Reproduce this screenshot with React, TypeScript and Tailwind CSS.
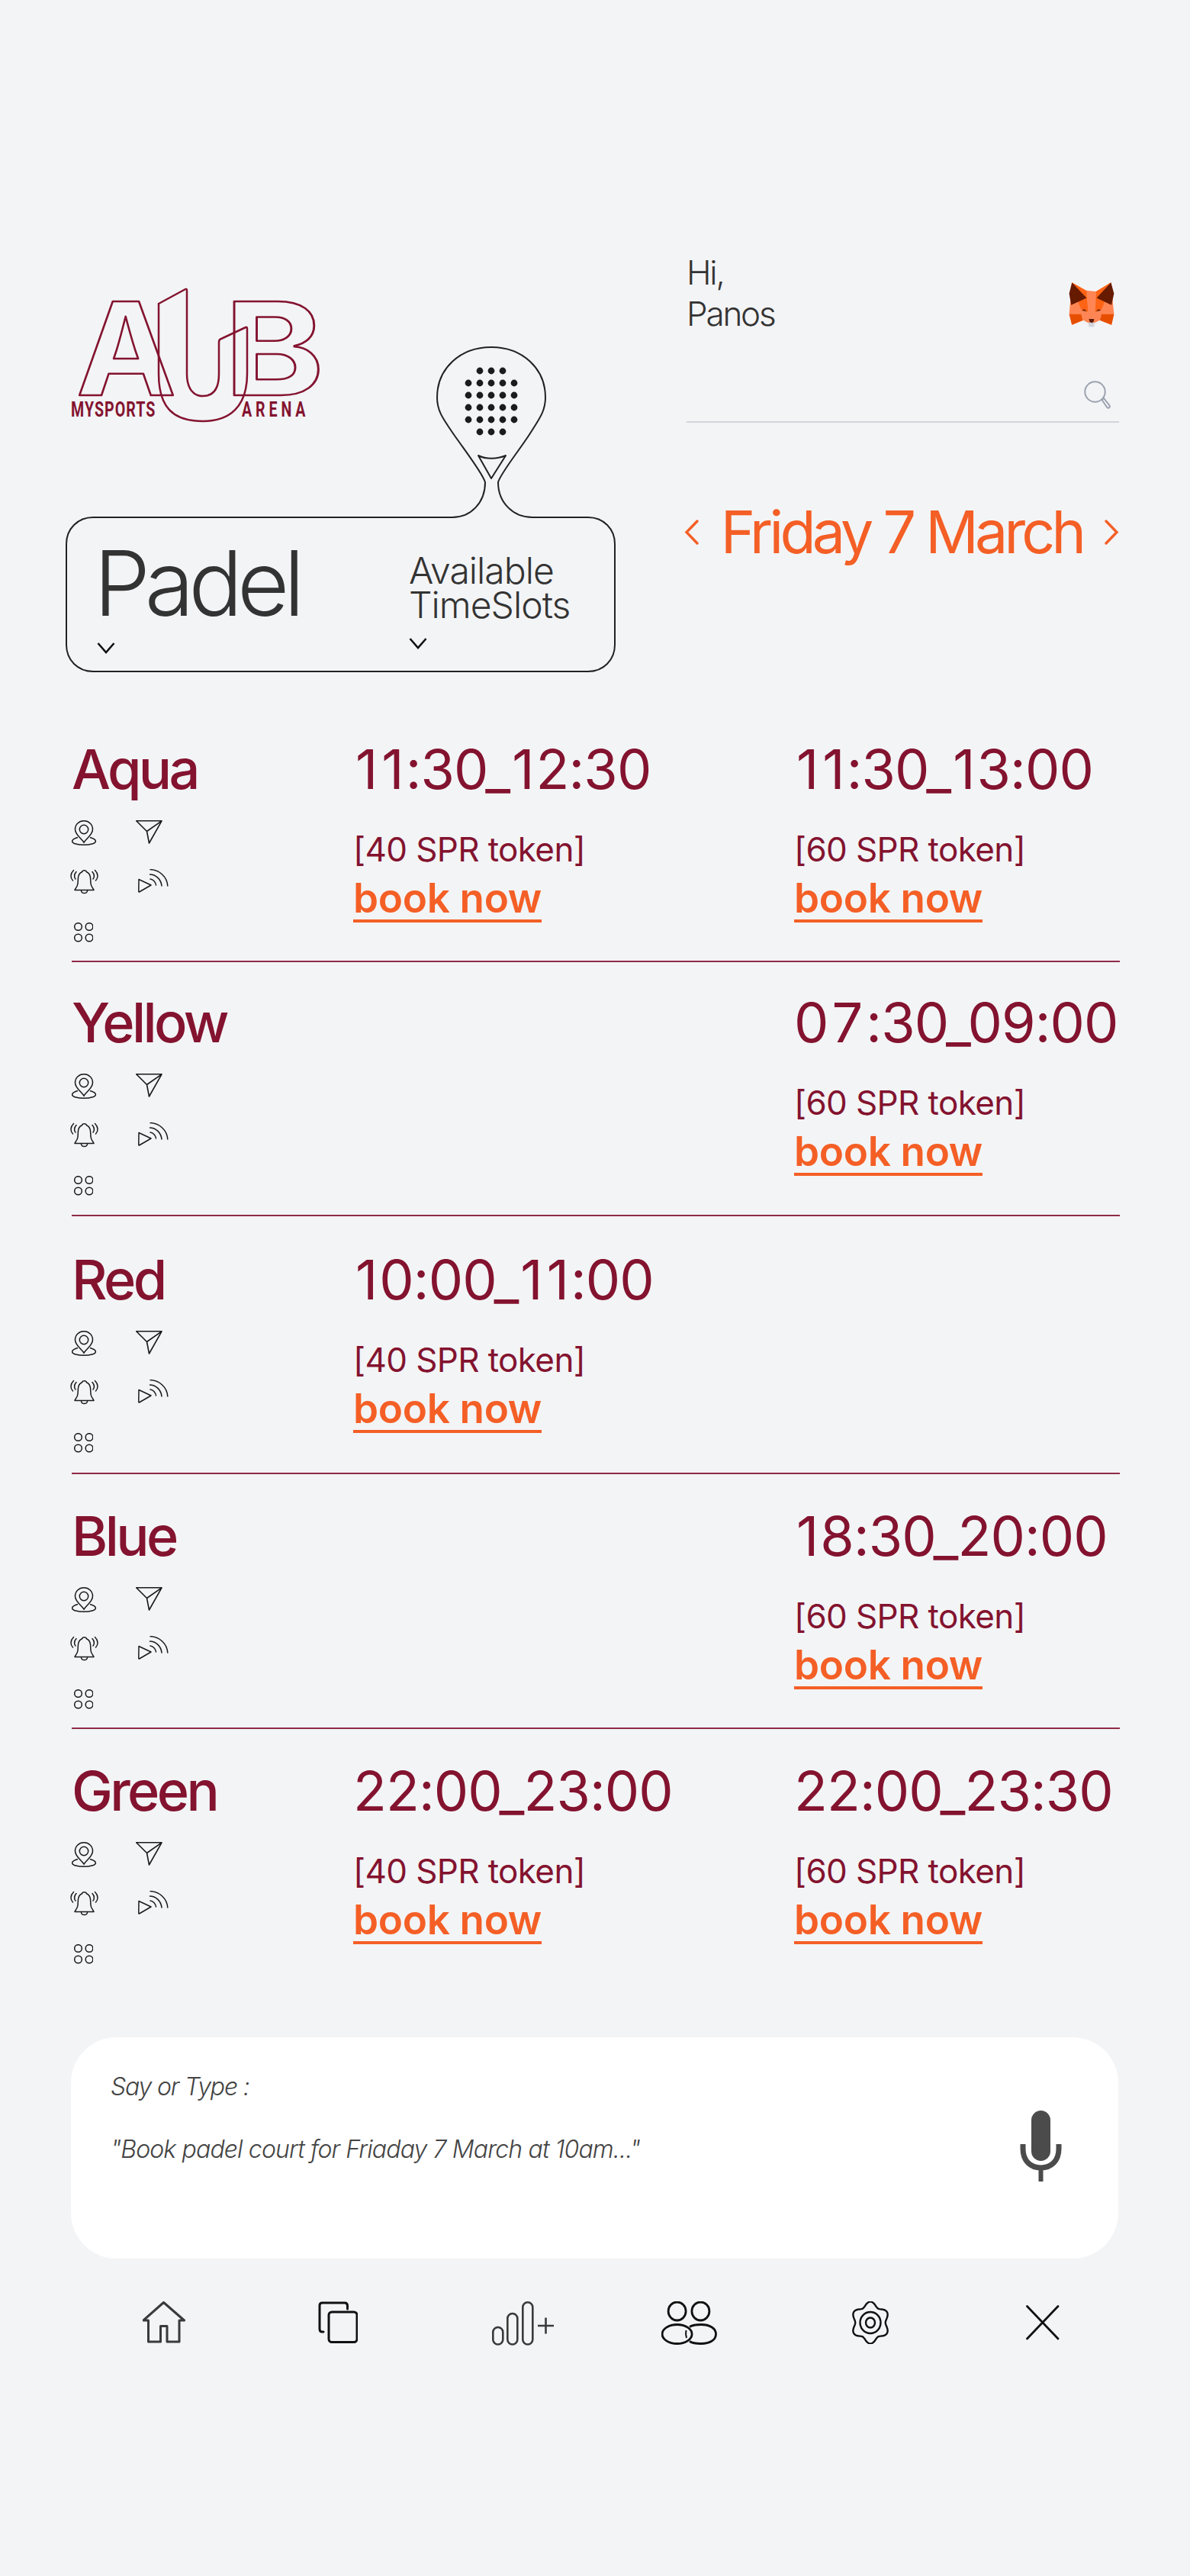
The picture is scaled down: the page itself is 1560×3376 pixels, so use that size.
import React from "react";

const MAROON = "#83132f";

interface Slot {
  time: string;
  price: string;
}

interface Court {
  name: string;
  left: Slot | null;
  right: Slot | null;
  rowClass: string;
  last?: boolean;
}

const courts: Court[] = [
  { name: "Aqua", left: { time: "11:30_12:30", price: "[40 SPR token]" }, right: { time: "11:30_13:00", price: "[60 SPR token]" }, rowClass: "pt-[34px] pb-[24px]" },
  { name: "Yellow", left: null, right: { time: "07:30_09:00", price: "[60 SPR token]" }, rowClass: "pt-[43px] pb-[25px]" },
  { name: "Red", left: { time: "10:00_11:00", price: "[40 SPR token]" }, right: null, rowClass: "pt-[47px] pb-[26px]" },
  { name: "Blue", left: null, right: { time: "18:30_20:00", price: "[60 SPR token]" }, rowClass: "pt-[45px] pb-[24px]" },
  { name: "Green", left: { time: "22:00_23:00", price: "[40 SPR token]" }, right: { time: "22:00_23:30", price: "[60 SPR token]" }, rowClass: "pt-[45px] pb-[26px]", last: true },
];

function Logo() {
  return (
    <svg width="330" height="216" viewBox="0 -30 330 216" fill="none" className="block -mt-[30px]">
      <text x="9" y="140" fontFamily="Inter, sans-serif" fontWeight="700" fontSize="169" stroke={MAROON} strokeWidth="2.5" strokeLinejoin="round" textLength="131" lengthAdjust="spacingAndGlyphs">A</text>
      <text x="203" y="140" fontFamily="Inter, sans-serif" fontWeight="700" fontSize="169" stroke={MAROON} strokeWidth="2.5" strokeLinejoin="round" textLength="131" lengthAdjust="spacingAndGlyphs">B</text>
      <path d="M117 20 L152 1 Q154 0 154 3 V112 C154 132 163 141 175 141 C188 141 196 132 196 112 V70 Q196 67 199 66 L231 51 Q233 50 233 53 V112 C233 155 210 174 175 174 C135 174 117 155 117 112 V20 Z" stroke={MAROON} strokeWidth="2.5" />
      <text transform="translate(2 168) scale(0.7 1)" fontFamily="Roboto, sans-serif" fontWeight="700" fontSize="28" letterSpacing="1.5" fill={MAROON}>MYSPORTS</text>
      <text transform="translate(226 168) scale(0.7 1)" fontFamily="Roboto, sans-serif" fontWeight="700" fontSize="28" letterSpacing="7" fill={MAROON}>ARENA</text>
    </svg>
  );
}

// outline of the box with the racket growing out of its top edge
function RacketOutline() {
  const rows = [487, 503, 519, 535, 551, 567];
  const cols = [613, 628, 643, 658, 673];
  return (
    <svg width="722" height="428" viewBox="85 455 722 428" fill="none" className="absolute left-0 bottom-0 pointer-events-none">
      <path
        d="M121 679 H592 C616 679 635 660 635 633 C632 622 612 596 595 572 C580 550 572 540 572 522 C572 484 602 456 643 456 C684 456 714 484 714 522 C714 540 706 550 692 572 C676 596 655 622 652 633 C652 660 672 679 697 679 H770 C790 679 805 694 805 714 V846 C805 866 790 881 770 881 H121 C101 881 86 866 86 846 V714 C86 694 101 679 121 679 Z"
        stroke="#222"
        strokeWidth="2"
      />
      <path d="M626 598 C636 603 650 603 662 598 L643 628 Z" stroke="#222" strokeWidth="2" strokeLinejoin="round" />
      {rows.map((y, r) =>
        cols.map((x, c) =>
          (r === 0 || r === 5) && (c === 0 || c === 4) ? null : <circle key={`${r}-${c}`} cx={x} cy={y} r="4.4" fill="#1c1c1c" />
        )
      )}
    </svg>
  );
}

function Fox() {
  return (
    <svg width="60" height="60" viewBox="90 86 184 180" className="block">
      <polygon points="103,88 162,120 200,124 260,88 272,215 262,258 215,240 182,262 150,240 103,258 92,215" fill="#ff8654" />
      <polygon points="103,88 162,122 165,190 130,170" fill="#ff6414" />
      <polygon points="260,88 200,124 198,190 232,170" fill="#ff6414" />
      <polygon points="103,88 92,132 100,178 162,150" fill="#661a00" />
      <polygon points="260,88 272,132 262,178 202,150" fill="#661a00" />
      <polygon points="130,172 162,150 168,205 140,195" fill="#ff6414" />
      <polygon points="232,172 202,150 196,205 222,195" fill="#ff6414" />
      <polygon points="142,199 152,194 164,204 150,203" fill="#8a3208" />
      <polygon points="220,199 210,194 198,204 212,203" fill="#8a3208" />
      <polygon points="92,215 140,215 146,240 103,258" fill="#e64f00" />
      <polygon points="272,215 222,215 216,240 262,258" fill="#e64f00" />
      <polygon points="146,240 170,250 170,266 192,266 192,250 216,240 195,264 168,264" fill="#eef0f4" />
      <polygon points="171,248 192,248 192,266 171,266" fill="#cfd4dc" />
      <polygon points="171,234 192,234 190,246 182,250 174,246" fill="#5a1a05" />
    </svg>
  );
}

function PinIcon() {
  return (
    <svg width="33" height="33" viewBox="0 0 33 33" fill="none" stroke="#1a1a1a" strokeWidth="1.5" className="block">
      <path d="M16 29 C13 24 4.5 19 4.5 12 C4.5 5.5 9.5 0.8 16 0.8 C22.5 0.8 27.5 5.5 27.5 12 C27.5 19 19 24 16 29 Z" />
      <circle cx="16" cy="12" r="5.7" />
      <path d="M8 22.5 C3 24 0.6 26 0.6 27.5 C0.6 30.5 8 32.2 16 32.2 C24 32.2 31.4 30.5 31.4 27.5 C31.4 26 29 24 24 22.5" />
    </svg>
  );
}

function SendIcon() {
  return (
    <svg width="35" height="31" viewBox="0 0 35 31" fill="none" stroke="#1a1a1a" strokeWidth="1.6" strokeLinejoin="round" className="block">
      <path d="M0.7 0.8 H34 L17.5 30 L14.5 14.5 Z M14.5 14.5 L34 0.8" />
    </svg>
  );
}

function BellIcon() {
  return (
    <svg width="37" height="33" viewBox="0 0 37 33" fill="none" stroke="#1a1a1a" strokeWidth="1.5" strokeLinecap="round" strokeLinejoin="round" className="block">
      <path d="M6 27.5 C6 26 9.5 24 10 19 L10.5 11 C11 6.5 14 4.5 15.5 3.8 C16 1 21 1 21.5 3.8 C23 4.5 26 6.5 26.5 11 L27 19 C27.5 24 31 26 31 27.5 Z" />
      <path d="M14.5 28.5 C15 32.5 22 32.5 22.5 28.5" />
      <path d="M4.5 1.5 C0 6 0 11.5 3.5 15 M8 3.5 C5 7 5 10.5 7 13" />
      <path d="M32.5 1.5 C37 6 37 11.5 33.5 15 M29 3.5 C32 7 32 10.5 30 13" />
    </svg>
  );
}

function RadarIcon() {
  return (
    <svg width="40" height="31" viewBox="0 0 40 31" fill="none" stroke="#1a1a1a" strokeWidth="1.5" strokeLinecap="round" strokeLinejoin="round" className="block">
      <path d="M1 13.5 L17 21 L1.5 30 Q0.8 30 0.8 29 Z" />
      <path d="M16 13 C20 13.5 23 17 23.5 21 M15.5 7 C23 7 30 13 31 22 M16 0.6 C28 1 38 10 38.8 22" />
    </svg>
  );
}

function DotsIcon() {
  return (
    <svg width="25" height="26" viewBox="0 0 25 26" fill="none" stroke="#1a1a1a" strokeWidth="1.5" className="block">
      <circle cx="5.5" cy="5.5" r="4.8" />
      <circle cx="20" cy="5.5" r="4.8" />
      <circle cx="5.5" cy="20" r="4.8" />
      <circle cx="20" cy="20" r="4.8" />
    </svg>
  );
}

function CourtIcons() {
  return (
    <div className="mt-[31px] grid grid-cols-[84px_1fr] grid-rows-[64px_70px_26px]">
      <PinIcon />
      <SendIcon />
      <div className="-ml-[2px]">
        <BellIcon />
      </div>
      <div className="ml-[3px]">
        <RadarIcon />
      </div>
      <div className="ml-[3px]">
        <DotsIcon />
      </div>
    </div>
  );
}

// the 1 and 7 sit wider in the design than in the installed Inter
function TimeText({ text }: { text: string }) {
  return (
    <>
      {text.split("").map((ch, i) =>
        ch === "1" ? (
          <span key={i} className="px-[3px]">
            1
          </span>
        ) : ch === "7" ? (
          <span key={i} className="px-[5px]">
            7
          </span>
        ) : (
          ch
        )
      )}
    </>
  );
}

function SlotCell({ slot }: { slot: Slot | null }) {
  if (!slot) return <div />;
  return (
    <div>
      <div className="text-[72px] leading-[72px] font-[380] tracking-[-0.013em] whitespace-nowrap">
        <TimeText text={slot.time} />
      </div>
      <div className="mt-[42px] text-[44px] leading-[54px] font-[380] tracking-[-0.014em] whitespace-nowrap">{slot.price}</div>
      <a className="mt-[6px] block w-fit text-[53px] leading-[62px] font-semibold tracking-[-0.006em] text-[#f45f26] underline decoration-[4px] underline-offset-[9px] whitespace-nowrap">
        book now
      </a>
    </div>
  );
}

function CourtRow({ court }: { court: Court }) {
  return (
    <div className={`grid grid-cols-[369px_578px_1fr] ${court.rowClass} ${court.last ? "" : "border-b-2 border-[#8f2a47]"}`}>
      <div>
        <div className="text-[72px] leading-[72px] font-medium tracking-[-0.05em]">{court.name}</div>
        <CourtIcons />
      </div>
      <SlotCell slot={court.left} />
      <SlotCell slot={court.right} />
    </div>
  );
}

function Mic() {
  return (
    <svg width="55" height="93" viewBox="0 0 55 93" fill="#4b4b4b" className="block">
      <rect x="15" y="0" width="25" height="66" rx="12.5" />
      <path d="M4 44 V50 C4 66 14 75 27.5 75 C41 75 51 66 51 50 V44" fill="none" stroke="#4b4b4b" strokeWidth="7" />
      <rect x="24.5" y="76" width="6" height="17" />
    </svg>
  );
}

// six lobed gear outline
const gearPath = (() => {
  const pts: string[] = [];
  for (let i = 0; i <= 120; i++) {
    const t = (i / 120) * Math.PI * 2;
    const r = 24.5 + 3 * Math.cos(6 * t);
    const x = 26 + r * Math.sin(t) * 0.92;
    const y = 28 - r * Math.cos(t);
    pts.push(`${i === 0 ? "M" : "L"}${x.toFixed(2)} ${y.toFixed(2)}`);
  }
  return pts.join(" ") + " Z";
})();

function BottomNav() {
  return (
    <div className="mt-[56px] flex items-start">
      <svg width="56" height="55" viewBox="0 0 56 55" fill="none" stroke="#3a3a3a" strokeWidth="3" strokeLinejoin="round" className="ml-[187px]">
        <path d="M27.5 1.5 L54.5 25 H48 V53 H32 V32.5 H23.5 V53 H7.5 V25 H0.8 Z" />
      </svg>
      <svg width="52" height="55" viewBox="0 0 52 55" fill="none" stroke="#111" strokeWidth="3" strokeLinecap="round" className="ml-[174px]">
        <path d="M7 40 H5 Q2 40 2 36 V5.5 Q2 2 5.5 2 H35 Q38.5 2 38.5 6 V10" />
        <rect x="14" y="14" width="37" height="39.5" rx="4" />
      </svg>
      <svg width="82" height="58" viewBox="0 0 82 58" fill="none" stroke="#3a3a3a" strokeWidth="2.6" className="ml-[176px]">
        <rect x="1.3" y="34" width="13" height="22.5" rx="6.5" />
        <rect x="20.3" y="16" width="13" height="40.5" rx="6.5" />
        <rect x="40.3" y="1.3" width="13" height="55.2" rx="6.5" />
        <path d="M60 32 H81 M70.5 21.5 V42.5" />
      </svg>
      <svg width="74" height="57" viewBox="0 0 74 57" fill="none" stroke="#111" strokeWidth="2.8" className="ml-[140px]">
        <ellipse cx="20.6" cy="13" rx="11.5" ry="12" />
        <ellipse cx="51.4" cy="13" rx="11.5" ry="12" />
        <ellipse cx="20.6" cy="43" rx="19.5" ry="12.5" />
        <path d="M37 33.5 C41 31 46 30.5 52 30.5 C63 30.5 71.5 35 71.5 43 C71.5 51 63 55.5 52 55.5 C46 55.5 41 55 37 52.5" />
        <path d="M32.5 38 C31.8 41 31.8 44 33 48" strokeWidth="2" />
      </svg>
      <svg width="53" height="56" viewBox="0 0 53 56" fill="none" stroke="#111" strokeWidth="2.4" className="ml-[174px]">
        <path d={gearPath} />
        <ellipse cx="26" cy="28" rx="13.5" ry="14" />
        <ellipse cx="26" cy="28" rx="6" ry="6.5" />
      </svg>
      <svg width="44" height="46" viewBox="0 0 44 46" fill="none" stroke="#111" strokeWidth="2.8" strokeLinecap="round" className="ml-[177px] mt-[5px]">
        <path d="M1.5 1.5 L42 44 M42 1.5 L1.5 44" />
      </svg>
    </div>
  );
}

export default function App() {
  return (
    <div className="w-[1560px] h-[3376px] bg-[#f3f4f6] font-['Inter',sans-serif] overflow-hidden">
      {/* header */}
      <div className="flex items-start pt-[330px] pl-[86px]">
        <div className="w-[720px] pt-[48px]">
          <div className="ml-[5px]">
            <Logo />
          </div>
          <div className="relative mt-[115px] h-[203px] w-[720px] text-[#333]">
            <RacketOutline />
            <div className="relative flex h-full">
              <div className="w-[450px] pl-[37px] pt-[26px]">
                <div className="text-[118px] leading-[118px] font-light tracking-[-0.062em]">Padel</div>
                <svg width="24" height="15" viewBox="0 0 24 15" fill="none" stroke="#111" strokeWidth="2.6" className="mt-[19px] ml-[4px]">
                  <path d="M1.5 1 L12 13 L22.5 1" />
                </svg>
              </div>
              <div className="pt-[46px]">
                <div className="text-[48px] leading-[45px] font-light tracking-[-0.02em]">
                  Available
                  <br />
                  TimeSlots
                </div>
                <svg width="24" height="15" viewBox="0 0 24 15" fill="none" stroke="#111" strokeWidth="2.6" className="mt-[21px]">
                  <path d="M1.5 1 L12 13 L22.5 1" />
                </svg>
              </div>
            </div>
          </div>
        </div>

        <div className="ml-[94px] w-[567px]">
          <div className="flex justify-between">
            <div className="text-[44px] leading-[54px] font-light tracking-[-0.05em] text-[#333]">
              Hi,
              <br />
              Panos
            </div>
            <div className="mt-[39px] mr-[6px]">
              <Fox />
            </div>
          </div>
          <div className="flex justify-end pt-[61px] pb-[16px] pr-[11px] border-b-2 border-[#d1d5db]">
            <svg width="35" height="37" viewBox="0 0 35 37" fill="none" stroke="#9ca3af" strokeWidth="2" className="block">
              <circle cx="14.5" cy="14.5" r="13.2" />
              <path d="M23.5 25 L26 23 L33.5 32.5 Q34.5 34.5 32.5 35.5 Q31 36 30 34.5 Z" />
            </svg>
          </div>
          <div className="mt-[98px] flex items-center justify-between text-[#f45f26]">
            <svg width="20" height="33" viewBox="0 0 20 33" fill="none" stroke="#f45f26" strokeWidth="3.4" strokeLinecap="round" className="-ml-[3px]">
              <path d="M17 2 L3 16.5 L17 31" />
            </svg>
            <div className="text-[77px] leading-[90px] font-normal tracking-[-0.062em] whitespace-nowrap">Friday 7 March</div>
            <svg width="20" height="33" viewBox="0 0 20 33" fill="none" stroke="#f45f26" strokeWidth="3.4" strokeLinecap="round">
              <path d="M3 2 L17 16.5 L3 31" />
            </svg>
          </div>
        </div>
      </div>

      {/* courts */}
      <div className="mx-[94px] mt-[56px] w-[1374px] text-[#83132f]">
        {courts.map((court) => (
          <CourtRow key={court.name} court={court} />
        ))}
      </div>

      {/* say or type */}
      <div className="ml-[93px] mt-[70px] flex h-[290px] w-[1373px] items-start justify-between rounded-[60px] bg-white pl-[52px] pr-[74px]">
        <div className="pt-[45px] italic font-light text-[#444]">
          <div className="text-[32px] leading-[40px] tracking-[-0.037em]">Say or Type :</div>
          <div className="mt-[42px] text-[32px] leading-[40px] tracking-[-0.027em]">"Book padel court for Friaday 7 March at 10am..."</div>
        </div>
        <div className="pt-[96px]">
          <Mic />
        </div>
      </div>

      <BottomNav />
    </div>
  );
}
